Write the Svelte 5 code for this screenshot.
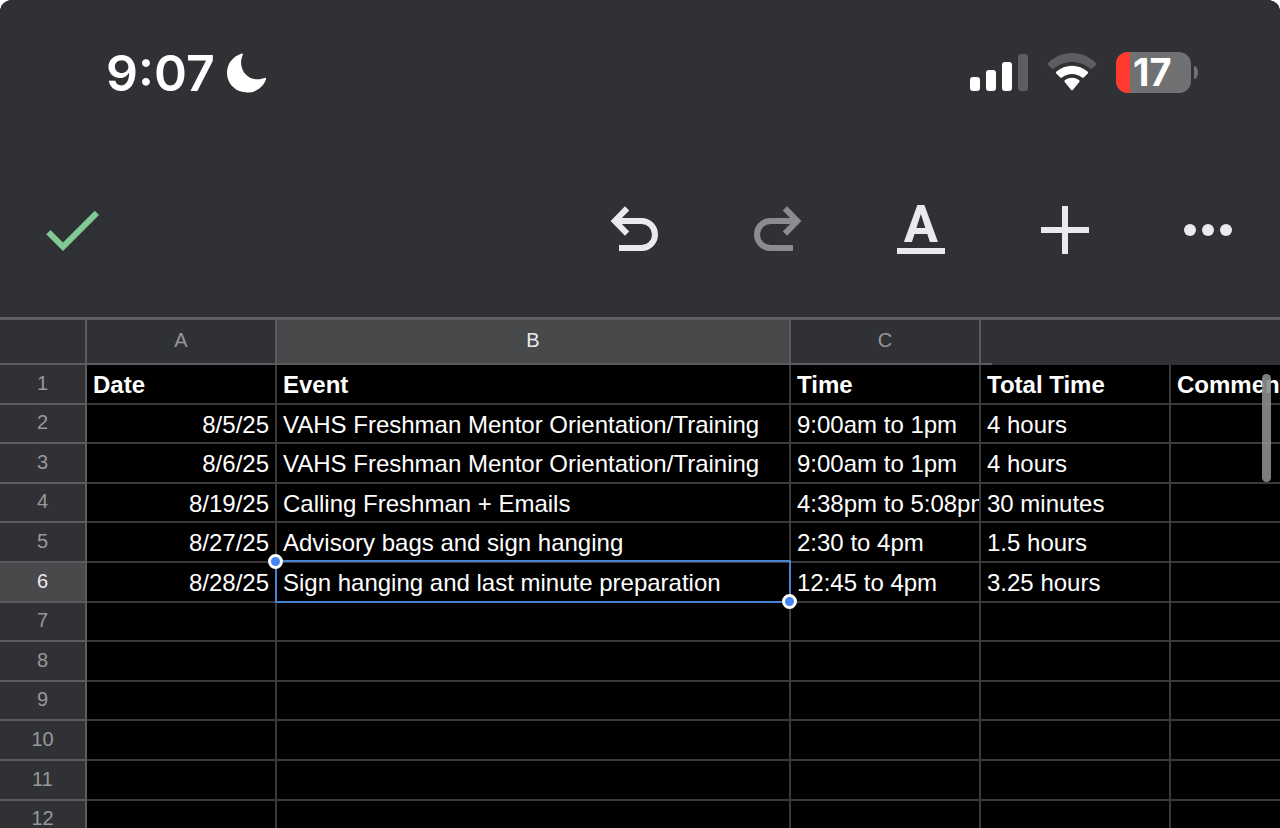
<script lang="ts">
    let columns = ['A', 'B', 'C']
    let activeColumn = 'B'
    let activeRow = 6

    let cells: string[][] = [
        ['Date', 'Event', 'Time', 'Total Time', 'Comments'],
        ['8/5/25', 'VAHS Freshman Mentor Orientation/Training', '9:00am to 1pm', '4 hours', ''],
        ['8/6/25', 'VAHS Freshman Mentor Orientation/Training', '9:00am to 1pm', '4 hours', ''],
        ['8/19/25', 'Calling Freshman + Emails', '4:38pm to 5:08pm', '30 minutes', ''],
        ['8/27/25', 'Advisory bags and sign hanging', '2:30 to 4pm', '1.5 hours', ''],
        ['8/28/25', 'Sign hanging and last minute preparation', '12:45 to 4pm', '3.25 hours', '']
    ]

    // pad with empty rows below the data
    let rows = Array.from({ length: 12 }, (_, i) => cells[i] ?? ['', '', '', '', ''])

    function isSelected(row: number, col: number) {
        return row + 1 === activeRow && columns[col] === activeColumn
    }
</script>

<div class="app">
    <header>
        <div class="status">
            <span class="time">9:07</span>
            <svg class="moon" viewBox="0 0 40 40" role="img" aria-label="Do not disturb">
                <path d="M14.6 .6C15.6 .1 16.3 .9 15.8 1.9C14.4 5 13.8 8 14.2 11.5C15.2 20 21.6 26 29.5 26.3C32.6 26.4 35 25.9 37.5 24.9C38.7 24.5 39.5 25.2 39 26.3C36 34.5 29 39.5 20.5 39.5C9 39.5 0 31 0 19.8C0 11 5.5 3.8 14.6 .6Z" fill="#fff" />
            </svg>
            <div class="indicators">
                <svg class="signal" viewBox="0 0 58 37" role="img" aria-label="Signal">
                    <rect x="0" y="23" width="10" height="14" rx="3" fill="#fff" />
                    <rect x="16" y="16" width="10" height="21" rx="3" fill="#fff" />
                    <rect x="32" y="8" width="10" height="29" rx="3" fill="#fff" />
                    <rect x="48" y="0" width="10" height="37" rx="3" fill="#5d5e61" />
                </svg>
                <svg class="wifi" viewBox="0 0 50 38" role="img" aria-label="Wi-Fi">
                    <path d="M.8 10.2Q0 11 .8 11.8L5.2 15.8Q6 16.4 6.8 15.7C17 6.7 33 6.7 43.2 15.7Q44 16.4 44.8 15.8L49.2 11.8Q50 11 49.2 10.2C35.5-3.4 14.5-3.4 .8 10.2Z" fill="#5d5e61" />
                    <path d="M9.2 18.8Q8.4 19.6 9.2 20.4L13.3 24.4Q14.1 25.1 15 24.4C20.7 19.7 29.3 19.7 35 24.4Q35.9 25.1 36.7 24.4L40.8 20.4Q41.6 19.6 40.8 18.8C32 10.7 18 10.7 9.2 18.8Z" fill="#fff" />
                    <path d="M17.6 27.4Q17 28.2 17.7 28.9L24 36.8Q25 37.8 26 36.8L32.3 28.9Q33 28.2 32.4 27.4C28.3 24 21.7 24 17.6 27.4Z" fill="#fff" />
                </svg>
                <div class="battery">
                    <div class="level"></div>
                    <span>17</span>
                </div>
                <div class="battery-tip"></div>
            </div>
        </div>
        <div class="toolbar">
            <button class="done" aria-label="Done">
                <svg viewBox="0 0 24 24"><path d="M9 16.17 4.83 12l-1.42 1.41L9 19 21 7l-1.41-1.41z" fill="currentColor" /></svg>
            </button>
            <div class="actions">
                <button aria-label="Undo">
                    <svg viewBox="0 0 24 24"><path d="M9.7 4.8 5.6 9l4.1 4.2M5.6 9h8.9a4.5 4.5 0 0 1 0 9H7" /></svg>
                </button>
                <button aria-label="Redo" disabled>
                    <svg viewBox="0 0 24 24"><path d="M14.3 4.8 18.4 9l-4.1 4.2M18.4 9H9.5a4.5 4.5 0 0 0 0 9H17" /></svg>
                </button>
                <button class="format" aria-label="Text format"><span>A</span></button>
                <button aria-label="Insert">
                    <svg viewBox="0 0 24 24"><path d="M12 4v16M4 12h16" /></svg>
                </button>
                <button aria-label="More">
                    <svg viewBox="0 0 24 24">
                        <g fill="currentColor" stroke="none">
                            <circle cx="6" cy="12" r="2" />
                            <circle cx="12" cy="12" r="2" />
                            <circle cx="18" cy="12" r="2" />
                        </g>
                    </svg>
                </button>
            </div>
        </div>
    </header>

    <div class="sheet">
        <table>
            <colgroup>
                <col class="numbers">
                <col>
                <col class="wide">
                <col>
                <col>
                <col>
            </colgroup>
            <thead>
                <tr>
                    <td></td>
                    {#each columns as column}
                        <th scope="col" class:active={column === activeColumn}>{column}</th>
                    {/each}
                    <td colspan="2" class="rest"></td>
                </tr>
            </thead>
            <tbody>
                {#each rows as row, i}
                    <tr>
                        <th scope="row" class:active={i + 1 === activeRow}>{i + 1}</th>
                        {#each row as value, j}
                            <td class:title={i === 0} class:date={i > 0 && j === 0} class:selected={isSelected(i, j)}>
                                {value}
                                {#if isSelected(i, j)}
                                    <div class="selection">
                                        <span class="handle start"></span>
                                        <span class="handle end"></span>
                                    </div>
                                {/if}
                            </td>
                        {/each}
                    </tr>
                {/each}
            </tbody>
        </table>
        <div class="scroll-thumb"></div>
    </div>
</div>

<style>
    :global(body) {
        background: #fff;
    }

    .app {
        display: flex;
        flex-direction: column;
        height: 100vh;
        overflow: hidden;
        border-radius: 12px 12px 0 0;
        background: #000;
        color: #fff;
        font-family: "Liberation Sans", Arial, sans-serif;
    }

    header {
        flex: none;
        background: #303134;
        border-bottom: 3px solid #5f6063;
    }

    .status {
        display: flex;
        align-items: center;
        height: 146px;
        padding: 0 82px 0 106px;
        font-family: Inter, sans-serif;
    }

    .time {
        font-size: 50px;
        font-weight: 600;
    }

    .moon {
        width: 40px;
        height: 40px;
        margin-left: 12px;
    }

    .indicators {
        display: flex;
        align-items: center;
        margin-left: auto;
        padding-bottom: 2px;
    }

    .signal {
        width: 58px;
        height: 37px;
    }

    .wifi {
        width: 50px;
        height: 38px;
        margin: 0 19px;
    }

    .battery {
        display: flex;
        align-items: center;
        gap: 3px;
        width: 75px;
        height: 41px;
        border-radius: 12px;
        overflow: hidden;
        background: #707173;
        font-size: 38px;
        font-weight: 700;
        line-height: 40px;
    }

    .level {
        width: 14px;
        height: 100%;
        background: #ff3b30;
    }

    .battery-tip {
        width: 4px;
        height: 13px;
        margin-left: 3px;
        border-radius: 0 4px 4px 0 / 0 6px 6px 0;
        background: #707173;
    }

    .toolbar {
        display: flex;
        align-items: center;
        justify-content: space-between;
        height: 168px;
        padding: 0 36px 3px;
    }

    .actions {
        display: flex;
        justify-content: space-between;
        width: 646px;
    }

    button {
        width: 72px;
        height: 72px;
        padding: 0;
        border: none;
        background: none;
        color: #e8eaed;
        cursor: pointer;
    }

    button:disabled {
        color: #8b8c8f;
        cursor: default;
    }

    button svg {
        display: block;
        width: 100%;
        height: 100%;
        fill: none;
        stroke: currentColor;
        stroke-width: 2;
    }

    .done {
        color: #81c995;
    }

    .done svg {
        stroke: none;
    }

    .format {
        display: flex;
        justify-content: center;
        align-items: center;
    }

    .format span {
        width: 48px;
        height: 48px;
        box-sizing: border-box;
        border-bottom: 6px solid;
        font-family: Roboto, sans-serif;
        font-size: 51px;
        font-weight: 700;
        line-height: 38px;
    }

    .sheet {
        position: relative;
        flex: 1;
        overflow: hidden;
    }

    table {
        width: 1361px;
        table-layout: fixed;
        border-collapse: separate;
        border-spacing: 0;
    }

    col {
        width: 190px;
    }

    .numbers {
        width: 87px;
    }

    .wide {
        width: 514px;
    }

    th,
    td {
        box-sizing: border-box;
        height: 40px;
        padding: 2px 6px 0;
        border-right: 2px solid #3a3a3b;
        border-bottom: 2px solid #3a3a3b;
        overflow: hidden;
        white-space: nowrap;
        font-size: 24px;
        line-height: 28px;
        text-align: left;
    }

    /* rows average a little under 40px */
    tbody tr:nth-child(5n + 2) > *,
    tbody tr:nth-child(5n + 4) > * {
        height: 39px;
    }

    th,
    thead td {
        padding: 0 6px 3px;
        background: #303134;
        border-color: #5b5c5f;
        color: #97989b;
        font-size: 20px;
        font-weight: 400;
        text-align: center;
    }

    thead th,
    thead td {
        height: 45px;
    }

    th.active {
        background: #48494b;
        color: #e8eaed;
    }

    /* the header rule stops just past the last lettered column */
    .rest {
        border: none;
        background: linear-gradient(#5b5c5f, #5b5c5f) left bottom / 11px 2px no-repeat #303134;
    }

    .title {
        font-weight: 700;
    }

    .date {
        text-align: right;
    }

    .selected {
        position: relative;
        overflow: visible;
    }

    .selection {
        position: absolute;
        inset: -3px -2px -2px -2px;
        border: 2px solid #4a80d0;
    }

    .handle {
        position: absolute;
        width: 9px;
        height: 9px;
        border: 3px solid #fff;
        border-radius: 50%;
        background: #4285f4;
    }

    .start {
        top: -8px;
        left: -9px;
    }

    .end {
        right: -8px;
        bottom: -8px;
    }

    .scroll-thumb {
        position: absolute;
        top: 54px;
        right: 9px;
        width: 9px;
        height: 108px;
        border-radius: 5px;
        background: rgba(140, 140, 140, 0.9);
    }
</style>
